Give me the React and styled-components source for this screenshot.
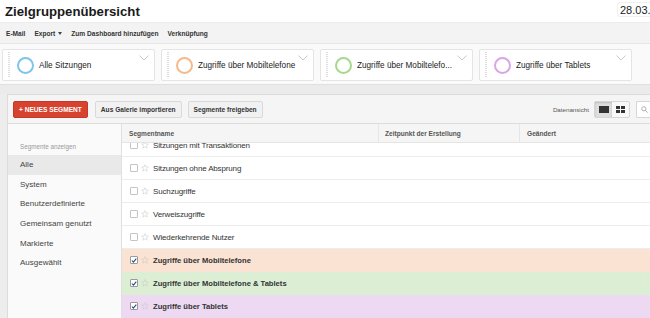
import styled, { createGlobalStyle } from "styled-components";

const GlobalStyle = createGlobalStyle`
  html, body {
    margin: 0;
    padding: 0;
    background: #ffffff;
    overflow: hidden;
  }
  * { box-sizing: border-box; }
`;

const Page = styled.div`
  width: 650px;
  height: 318px;
  overflow: hidden;
  font-family: "Liberation Sans", Arial, sans-serif;
  color: #333;
  background: #ededed;
`;

const TitleBar = styled.div`
  height: 22px;
  display: flex;
  justify-content: space-between;
  align-items: flex-start;
  background: #fff;
`;

const Title = styled.h1`
  margin: 0;
  padding: 5px 0 0 5px;
  font-size: 13.2px;
  line-height: 14px;
  font-weight: bold;
  color: #1a1a1a;
`;

const DateBox = styled.div`
  margin-top: 2px;
  width: 33px;
  height: 15px;
  white-space: nowrap;
  padding: 1px 0 0 2px;
  font-size: 11px;
  color: #222;
  border: 1px solid #f0f0f0;
  border-right: none;
  border-radius: 3px 0 0 3px;
`;

const ActionBar = styled.div`
  height: 22px;
  display: flex;
  align-items: center;
  gap: 9px;
  padding-left: 6px;
  background: #f3f3f3;
  border-top: 1px solid #ececec;
  border-bottom: 1px solid #e6e6e6;
`;

const Action = styled.span`
  font-size: 6.6px;
  font-weight: bold;
  color: #333;
`;

const Caret = styled.span`
  display: inline-block;
  margin-left: 3px;
  border-left: 2.5px solid transparent;
  border-right: 2.5px solid transparent;
  border-top: 3px solid #444;
  vertical-align: 1px;
`;

const CardStrip = styled.div`
  height: 40px;
  display: flex;
  gap: 6px;
  padding: 5px 0 0 2px;
  background: #fafafa;
`;

const Card = styled.div`
  position: relative;
  width: 153px;
  height: 32px;
  display: flex;
  align-items: center;
  background: #fff;
  border: 1px solid #e4e4e4;
  border-radius: 2px;
  padding-left: 5px;
`;

const Grip = styled.div`
  width: 2px;
  height: 26px;
  background: repeating-linear-gradient(
    to bottom,
    #dcdcdc 0 1px,
    transparent 1px 2px
  );
`;

const Ring = styled.div`
  width: 17px;
  height: 17px;
  margin-left: 7px;
  border-radius: 50%;
  border: 2.5px solid ${(p) => p.$color};
  flex-shrink: 0;
`;

const CardLabel = styled.span`
  margin-left: 5px;
  font-size: 8.2px;
  color: #222;
  white-space: nowrap;
`;

const Chevron = styled.svg`
  position: absolute;
  top: 5px;
  right: 5px;
`;

const Band = styled.div`
  height: 10px;
  background: #ebebeb;
  border-top: 1px solid #e0e0e0;
`;

const Panel = styled.div`
  margin-left: 7px;
  height: 224px;
  background: #fff;
  border-left: 1px solid #dcdcdc;
  border-top: 1px solid #dcdcdc;
  display: flex;
  flex-direction: column;
`;

const PanelToolbar = styled.div`
  height: 29px;
  flex-shrink: 0;
  display: flex;
  align-items: center;
  gap: 6px;
  padding: 0 0 0 5px;
  background: #f5f5f5;
  border-bottom: 1px solid #dddddd;
`;

const Button = styled.button`
  height: 17px;
  padding: 0 5px;
  font-family: inherit;
  font-size: 6.6px;
  font-weight: bold;
  border-radius: 2px;
  cursor: pointer;
  color: ${(p) => (p.$primary ? "#fff" : "#333")};
  background: ${(p) => (p.$primary ? "#d8432f" : "#f1f1f1")};
  border: 1px solid ${(p) => (p.$primary ? "#c23a28" : "#d9d9d9")};
  margin-right: ${(p) => (p.$primary ? "1px" : "0")};
`;

const Spacer = styled.div`
  flex: 1;
`;

const ViewLabel = styled.span`
  font-size: 6.2px;
  color: #555;
  margin-right: -1px;
`;

const ToggleGroup = styled.div`
  display: flex;
  height: 17px;
  border: 1px solid #d6d6d6;
  border-radius: 2px;
  background: #f8f8f8;
`;

const Toggle = styled.div`
  width: 17px;
  display: flex;
  align-items: center;
  justify-content: center;
  background: ${(p) => (p.$active ? "#dedede" : "transparent")};
  box-shadow: ${(p) => (p.$active ? "inset 0 1px 2px rgba(0,0,0,0.15)" : "none")};
`;

const Search = styled.div`
  width: 14px;
  height: 17px;
  display: flex;
  align-items: center;
  padding-left: 4px;
  background: #fff;
  border: 1px solid #d6d6d6;
  border-right: none;
  border-radius: 2px 0 0 2px;
`;

const PanelBody = styled.div`
  flex: 1;
  display: flex;
  min-height: 0;
`;

const Sidebar = styled.div`
  width: 114px;
  flex-shrink: 0;
  background: #fafafa;
  border-right: 1px solid #e0e0e0;
`;

const SidebarLabel = styled.div`
  padding: 18px 0 4px 12px;
  line-height: 9px;
  font-size: 6.3px;
  color: #999;
`;

const SidebarItem = styled.div`
  height: 19.6px;
  display: flex;
  align-items: center;
  padding-left: 12px;
  font-size: 8px;
  color: #444;
  background: ${(p) => (p.$active ? "#e9e9e9" : "transparent")};
`;

const Table = styled.div`
  flex: 1;
  display: flex;
  flex-direction: column;
  min-width: 0;
`;

const HeaderRow = styled.div`
  height: 19px;
  flex-shrink: 0;
  display: grid;
  grid-template-columns: 256px 141px 1fr;
  background: #f5f5f5;
  border-bottom: 1px solid #e4e4e4;
  position: relative;
  z-index: 1;
`;

const HeaderCell = styled.div`
  display: flex;
  align-items: center;
  padding-left: ${(p) => p.$pad || 7}px;
  font-size: 6.6px;
  font-weight: bold;
  color: #555;
  border-left: ${(p) => (p.$divider ? "1px solid #e6e6e6" : "none")};
`;

const RowsViewport = styled.div`
  flex: 1;
  overflow: hidden;
`;

const Rows = styled.div`
  margin-top: -9px;
`;

const Row = styled.div`
  height: 23px;
  display: flex;
  align-items: center;
  padding-left: 8px;
  background: ${(p) => p.$bg || "#fff"};
  border-bottom: 1px solid ${(p) => (p.$bg ? p.$bg : "#ededed")};
`;

const Check = styled.div`
  width: 8px;
  height: 8px;
  border: 1px solid ${(p) => (p.$checked ? "#9a9a9a" : "#c4c4c4")};
  background: #fff;
  display: flex;
  align-items: center;
  justify-content: center;
  border-radius: 1px;
`;

const Star = styled.svg`
  margin-left: 3px;
  margin-right: 4px;
`;

const RowName = styled.span`
  font-size: ${(p) => (p.$bold ? "7.6px" : "8px")};
  font-weight: ${(p) => (p.$bold ? "bold" : "normal")};
  letter-spacing: ${(p) => (p.$bold ? "0" : "-0.15px")};
  color: #333;
  white-space: nowrap;
`;

const cards = [
  { label: "Alle Sitzungen", color: "#7fc4e9" },
  { label: "Zugriffe über Mobiltelefone", color: "#f5b98b" },
  { label: "Zugriffe über Mobiltelefone & Tablets", color: "#a6d88f" },
  { label: "Zugriffe über Tablets", color: "#d8a6e6" },
];

const sideItems = [
  "Alle",
  "System",
  "Benutzerdefinierte",
  "Gemeinsam genutzt",
  "Markierte",
  "Ausgewählt",
];

const rows = [
  { name: "Sitzungen mit Transaktionen" },
  { name: "Sitzungen ohne Absprung" },
  { name: "Suchzugriffe" },
  { name: "Verweiszugriffe" },
  { name: "Wiederkehrende Nutzer" },
  { name: "Zugriffe über Mobiltelefone", checked: true, bg: "#fae3d2" },
  { name: "Zugriffe über Mobiltelefone & Tablets", checked: true, bg: "#dcefd5" },
  { name: "Zugriffe über Tablets", checked: true, bg: "#eddaf2" },
];

const shorten = (text) => (text.length > 28 ? text.slice(0, 25) + "..." : text);

function StarIcon() {
  return (
    <Star width="8" height="8" viewBox="0 0 24 24">
      <polygon
        points="12,2 15,9 22,9.3 16.5,14 18.5,21.5 12,17.3 5.5,21.5 7.5,14 2,9.3 9,9"
        fill="none"
        stroke="#c9c9c9"
        strokeWidth="1.6"
        strokeLinejoin="round"
      />
    </Star>
  );
}

function CheckMark() {
  return (
    <svg width="7" height="7" viewBox="0 0 10 10">
      <polyline
        points="1.5,5 4,7.8 8.8,1.8"
        fill="none"
        stroke="#2c4a8a"
        strokeWidth="1.8"
      />
    </svg>
  );
}

function App() {
  return (
    <Page>
      <GlobalStyle />
      <TitleBar>
        <Title>Zielgruppenübersicht</Title>
        <DateBox>28.03.</DateBox>
      </TitleBar>

      <ActionBar>
        <Action>E-Mail</Action>
        <Action>
          Export
          <Caret />
        </Action>
        <Action>Zum Dashboard hinzufügen</Action>
        <Action>Verknüpfung</Action>
      </ActionBar>

      <CardStrip>
        {cards.map((c) => (
          <Card key={c.label}>
            <Grip />
            <Ring $color={c.color} />
            <CardLabel>{shorten(c.label)}</CardLabel>
            <Chevron width="10" height="6" viewBox="0 0 10 6">
              <polyline points="0.5,0.5 5,5 9.5,0.5" fill="none" stroke="#c8c8c8" strokeWidth="1" />
            </Chevron>
          </Card>
        ))}
      </CardStrip>

      <Band />

      <Panel>
        <PanelToolbar>
          <Button $primary>+ NEUES SEGMENT</Button>
          <Button>Aus Galerie importieren</Button>
          <Button>Segmente freigeben</Button>
          <Spacer />
          <ViewLabel>Datenansicht</ViewLabel>
          <ToggleGroup>
            <Toggle $active>
              <svg width="10" height="7" viewBox="0 0 10 7">
                <rect x="0" y="0" width="10" height="7" fill="#333" />
              </svg>
            </Toggle>
            <Toggle>
              <svg width="9" height="7" viewBox="0 0 9 7">
                <rect x="0" y="0" width="4" height="3" fill="#333" />
                <rect x="5" y="0" width="4" height="3" fill="#333" />
                <rect x="0" y="4" width="4" height="3" fill="#333" />
                <rect x="5" y="4" width="4" height="3" fill="#333" />
              </svg>
            </Toggle>
          </ToggleGroup>
          <Search>
            <svg width="7" height="7" viewBox="0 0 10 10">
              <circle cx="4" cy="4" r="3" fill="none" stroke="#aaa" strokeWidth="1.3" />
              <line x1="6.2" y1="6.2" x2="9.5" y2="9.5" stroke="#aaa" strokeWidth="1.4" />
            </svg>
          </Search>
        </PanelToolbar>

        <PanelBody>
          <Sidebar>
            <SidebarLabel>Segmente anzeigen</SidebarLabel>
            {sideItems.map((s, i) => (
              <SidebarItem key={s} $active={i === 0}>
                {s}
              </SidebarItem>
            ))}
          </Sidebar>

          <Table>
            <HeaderRow>
              <HeaderCell>Segmentname</HeaderCell>
              <HeaderCell $divider $pad={6}>Zeitpunkt der Erstellung</HeaderCell>
              <HeaderCell $divider>Geändert</HeaderCell>
            </HeaderRow>
            <RowsViewport>
              <Rows>
                {rows.map((r) => (
                  <Row key={r.name} $bg={r.bg}>
                    <Check $checked={r.checked}>{r.checked && <CheckMark />}</Check>
                    <StarIcon />
                    <RowName $bold={r.checked}>{r.name}</RowName>
                  </Row>
                ))}
              </Rows>
            </RowsViewport>
          </Table>
        </PanelBody>
      </Panel>
    </Page>
  );
}

export default App;
